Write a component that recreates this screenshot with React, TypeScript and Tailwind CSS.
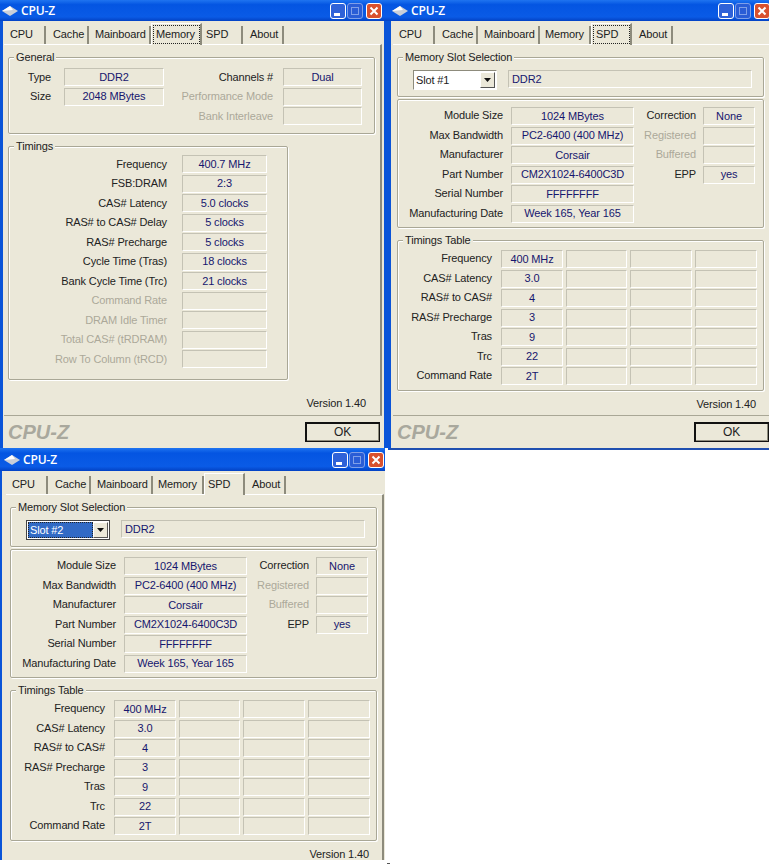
import type { ReactNode } from "react";

const spdRows = [
  ["Module Size", "1024 MBytes", "Correction", "None", false],
  ["Max Bandwidth", "PC2-6400 (400 MHz)", "Registered", "", true],
  ["Manufacturer", "Corsair", "Buffered", "", true],
  ["Part Number", "CM2X1024-6400C3D", "EPP", "yes", false],
  ["Serial Number", "FFFFFFFF", "", "", false],
  ["Manufacturing Date", "Week 165, Year 165", "", "", false],
] as const;

const timingTable = [
  ["Frequency", "400 MHz"],
  ["CAS# Latency", "3.0"],
  ["RAS# to CAS#", "4"],
  ["RAS# Precharge", "3"],
  ["Tras", "9"],
  ["Trc", "22"],
  ["Command Rate", "2T"],
];

const memoryTimings = [
  ["Frequency", "400.7 MHz", false],
  ["FSB:DRAM", "2:3", false],
  ["CAS# Latency", "5.0 clocks", false],
  ["RAS# to CAS# Delay", "5 clocks", false],
  ["RAS# Precharge", "5 clocks", false],
  ["Cycle Time (Tras)", "18 clocks", false],
  ["Bank Cycle Time (Trc)", "21 clocks", false],
  ["Command Rate", "", true],
  ["DRAM Idle Timer", "", true],
  ["Total CAS# (tRDRAM)", "", true],
  ["Row To Column (tRCD)", "", true],
] as const;

function Field({ value = "", className = "" }: { value?: string; className?: string }) {
  return (
    <div className={`flex h-[18px] items-center justify-center border border-[#c4c2b4] border-r-white border-b-white text-[#16166e] ${className}`}>
      {value}
    </div>
  );
}

function Group({ title, className = "", children }: { title?: string; className?: string; children: ReactNode }) {
  return (
    <div className={`relative rounded-[2px] border border-[#a9a796] shadow-[inset_1px_1px_0_#fff,1px_1px_0_#fff] ${className}`}>
      {title && <span className="absolute -top-[8px] left-[5px] bg-[#ebe8d9] px-[2px] leading-[14px] text-[#222]">{title}</span>}
      {children}
    </div>
  );
}

const tabs = [
  ["CPU", "w-[42px]", "pl-[6px]"],
  ["Cache", "w-[43px]", "pl-[7px]"],
  ["Mainboard", "w-[62px]", "pl-[6px]"],
  ["Memory", "w-[51px]", "pl-[5px]"],
  ["SPD", "w-[41px]", "pl-[4px]"],
  ["About", "w-[41px]", "pl-[7px]"],
];

function Tabs({ active, focused }: { active: string; focused?: boolean }) {
  return (
    <div className="flex h-[23px] items-end">
      {tabs.map(([name, w, pad]) =>
        name === active ? (
          <div key={name} className={`${w} z-10 -mb-px flex h-[22px] flex-col border-t border-l border-r-2 border-t-white border-l-white border-r-[#8d8b7c] bg-[#ebe8d9] pb-[1px] pl-[1px] pt-[1px]`}>
            <span className={`flex h-[19px] items-center pl-[2px] text-[#222] ${focused ? "border border-dotted border-[#222]" : ""}`}>{name}</span>
          </div>
        ) : (
          <div key={name} className={`${w} ${pad} flex h-[18px] items-center border-r-2 border-r-[#8d8b7c] pb-[1px] text-[#222]`}>
            {name}
          </div>
        ),
      )}
    </div>
  );
}

function TitleBar({ className }: { className: string }) {
  return (
    <div className={`flex shrink-0 items-center bg-[linear-gradient(#1f74f0,#0455e2_22%,#0a5be6_80%,#0342c4)] text-white ${className}`}>
      <svg width="16" height="10" viewBox="0 0 16 10">
        <path d="M0 5 8 0 16 5 8 10Z" fill="#c9ced8" />
        <path d="M0 5 8 0 11 4Z" fill="#fff" />
      </svg>
      <span className="ml-[3px] font-['Open_Sans',sans-serif] text-[12px] font-semibold">CPU-Z</span>
      <div className="ml-auto flex">
        <span className="relative h-[16px] w-[16px] rounded-[3px] border border-white bg-[#2f62d8]">
          <span className="absolute bottom-[2px] left-[3px] h-[3px] w-[6px] bg-white" />
        </span>
        <span className="relative ml-[1px] h-[16px] w-[16px] rounded-[3px] border border-[#7f9fe8] bg-[#2a5dd6]">
          <span className="absolute left-[3px] top-[3px] h-[8px] w-[8px] border border-[#7f9fe8]" />
        </span>
        <span className="ml-[3px] flex h-[16px] w-[16px] items-center justify-center rounded-[3px] border border-white bg-[#d9512e]">
          <svg width="10" height="10" viewBox="0 0 10 10">
            <path d="M1.5 1.5 8.5 8.5M8.5 1.5 1.5 8.5" stroke="#fff" strokeWidth="2" />
          </svg>
        </span>
      </div>
    </div>
  );
}

function Footer() {
  return (
    <div className="mt-[6px] flex w-[376px] items-center justify-between pl-[4px]">
      <span className="font-['Liberation_Sans',sans-serif] text-[20px] font-bold italic leading-[18px] tracking-normal text-[#a9a89d]">CPU-Z</span>
      <button className="h-[20px] w-[75px] border border-[#111] bg-[#ebe8d9] text-[12px] leading-none text-[#222] shadow-[inset_1px_1px_0_#111,inset_-1px_-1px_0_#8d8b7c]">OK</button>
    </div>
  );
}

function Panel({ children }: { children: ReactNode }) {
  return (
    <div className="h-[372px] w-[378px] border-t border-r-2 border-b border-t-white border-r-[#8d8b7c] border-b-[#a9a796] pl-[4px] pt-[12px]">
      {children}
    </div>
  );
}

function MemoryPage() {
  return (
    <>
      <Panel>
        <Group title="General" className="h-[77px] w-[367px]">
          <div className="flex pl-[9px] pt-[10px]">
            <div className="flex w-[146px] flex-col gap-[1.5px]">
              {[["Type", "DDR2"], ["Size", "2048 MBytes"]].map(([l, v]) => (
                <div key={l} className="flex items-center">
                  <span className="w-[33px] text-right text-[#222]">{l}</span>
                  <Field value={v} className="ml-[13px] w-[100px]" />
                </div>
              ))}
            </div>
            <div className="flex flex-col gap-[1.5px]">
              {[["Channels #", "Dual", false], ["Performance Mode", "", true], ["Bank Interleave", "", true]].map(([l, v, off]) => (
                <div key={l as string} className="flex items-center">
                  <span className={`w-[109px] text-right ${off ? "text-[#aca899]" : "text-[#222]"}`}>{l}</span>
                  <Field value={v as string} className="ml-[10px] w-[79px]" />
                </div>
              ))}
            </div>
          </div>
        </Group>
        <Group title="Timings" className="mt-[12px] h-[234px] w-[280px]">
          <div className="flex flex-col gap-[1.5px] pt-[8px]">
            {memoryTimings.map(([l, v, off]) => (
              <div key={l} className="flex items-center">
                <span className={`w-[158px] text-right ${off ? "text-[#aca899]" : "text-[#222]"}`}>{l}</span>
                <Field value={v} className="ml-[15px] w-[85px]" />
              </div>
            ))}
          </div>
        </Group>
        <div className="mt-[16px] w-[358px] text-right leading-[14px] text-[#222]">Version 1.40</div>
      </Panel>
      <Footer />
    </>
  );
}

function SpdPage({ slot, selected }: { slot: string; selected?: boolean }) {
  return (
    <>
      <Panel>
        <Group title="Memory Slot Selection" className="h-[40px] w-[367px]">
          <div className="flex items-start pl-[15px] pt-[12px]">
            <div className={`flex h-[20px] w-[84px] items-center border bg-white p-[1px] ${selected ? "border-[#444]" : "border-[#8d8b7c] border-r-white border-b-white"}`}>
              <span className={`flex h-full flex-1 items-center pl-[1px] ${selected ? "border border-dotted border-[#222] bg-[#316ac5] text-white" : "text-[#222]"}`}>{slot}</span>
              <span className="flex h-full w-[15px] items-center justify-center border border-white border-r-[#555] border-b-[#555] bg-[#ebe8d9]">
                <svg width="7" height="4" viewBox="0 0 7 4"><path d="M0 0H7L3.5 4Z" fill="#111" /></svg>
              </span>
            </div>
            <Field value="DDR2" className="ml-[11px] w-[244px] justify-start pl-[3px]" />
          </div>
        </Group>
        <Group className="mt-[2px] h-[129px] w-[367px]">
          <div className="flex flex-col gap-[1.5px] pt-[7px]">
            {spdRows.map(([l, v, l2, v2, off]) => (
              <div key={l} className="flex items-center">
                <span className="w-[105px] pb-[2px] text-right leading-[14px] text-[#222]">{l}</span>
                <Field value={v} className="ml-[8px] w-[123px]" />
                {l2 && (
                  <>
                    <span className={`w-[62px] pb-[2px] text-right leading-[14px] ${off ? "text-[#aca899]" : "text-[#222]"}`}>{l2}</span>
                    <Field value={v2} className="ml-[7px] w-[52px]" />
                  </>
                )}
              </div>
            ))}
          </div>
        </Group>
        <Group title="Timings Table" className="mt-[12px] h-[151px] w-[367px]">
          <div className="flex flex-col gap-[1.5px] pt-[9px]">
            {timingTable.map(([l, v]) => (
              <div key={l} className="flex items-center">
                <span className="w-[94px] pb-[2px] text-right leading-[14px] text-[#222]">{l}</span>
                <Field value={v} className="ml-[9px] w-[62px]" />
                <Field className="ml-[3px] w-[61px]" />
                <Field className="ml-[3px] w-[62px]" />
                <Field className="ml-[3px] w-[62px]" />
              </div>
            ))}
          </div>
        </Group>
        <div className="mt-[6px] w-[359px] text-right leading-[14px] text-[#222]">Version 1.40</div>
      </Panel>
    </>
  );
}

export default function App() {
  return (
    <div className="relative h-[865px] w-[769px] overflow-hidden bg-white font-['Liberation_Sans',sans-serif] text-[11px] tracking-[-0.13px]">
      <div className="absolute left-0 top-0 flex h-[448px] w-[388px] flex-col overflow-hidden bg-[#ebe8d9]">
        <TitleBar className="h-[21px] pl-[2px] pr-[6px]" />
        <div className="flex-1 border-r-4 border-l-[3px] border-[#0a54d8] pl-[1px]">
          <Tabs active="Memory" focused />
          <MemoryPage />
        </div>
      </div>

      <div className="absolute left-[388px] top-0 flex h-[450px] w-[388px] flex-col overflow-hidden bg-[#ebe8d9]">
        <TitleBar className="h-[21px] pl-[4px] pr-[6px]" />
        <div className="flex-1 border-b-2 border-l-[3px] border-b-[#1f4fb0] border-l-[#0a54d8] pl-[2px]">
          <Tabs active="SPD" focused />
          <SpdPage slot="Slot #1" />
          <Footer />
        </div>
      </div>

      <div className="absolute left-0 top-[448px] flex h-[412px] w-[385px] flex-col overflow-hidden bg-[#ebe8d9]">
        <TitleBar className="h-[23px] pl-[4px] pr-[1px]" />
        <div className="flex-1 border-l-2 border-[#0a54d8] pl-[4px]">
          <Tabs active="SPD" />
          <SpdPage slot="Slot #2" selected />
        </div>
      </div>

      <span className="absolute left-[387px] top-[863px] h-[1px] w-[3px] bg-[#555]" />
    </div>
  );
}
